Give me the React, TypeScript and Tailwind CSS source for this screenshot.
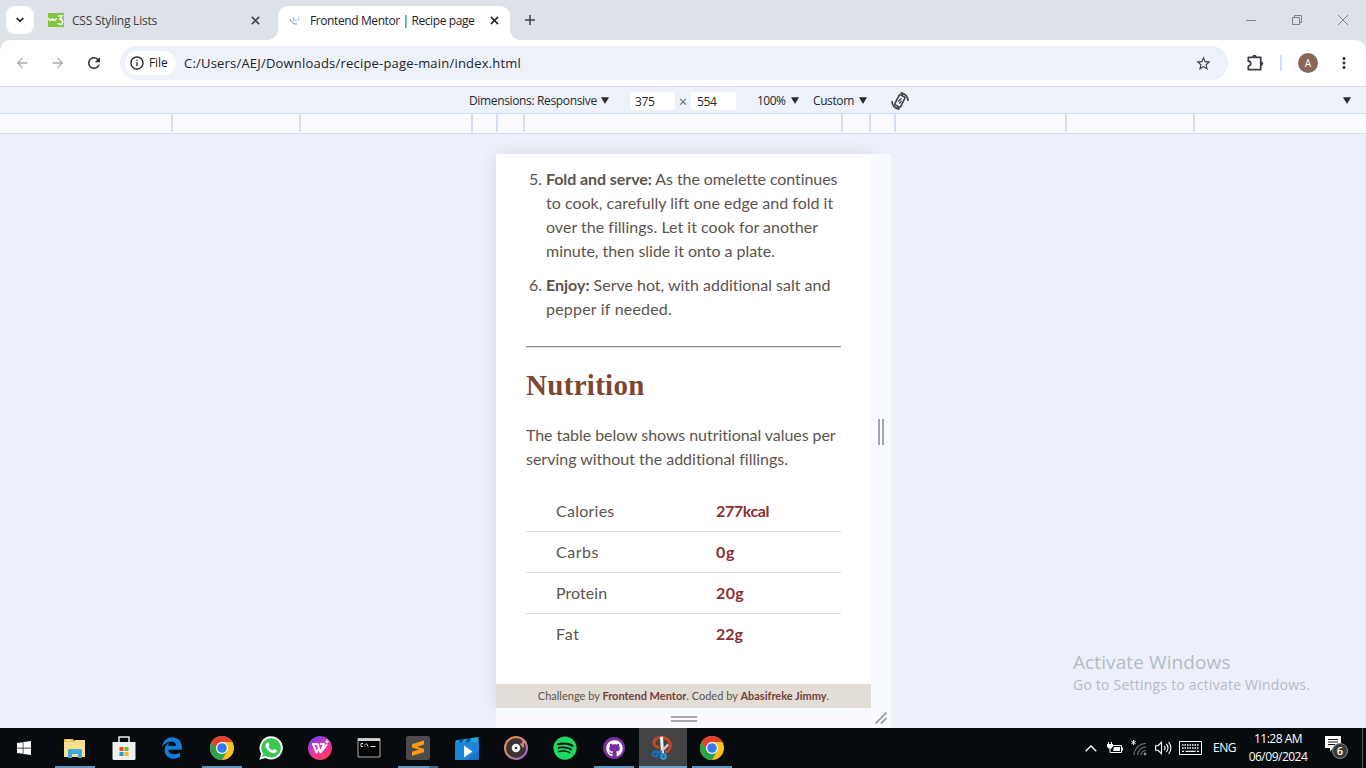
import React from "react";
import { MdArrowBack, MdArrowForward, MdRefresh, MdInfoOutline, MdStarBorder, MdMoreVert } from "react-icons/md";
import { FaWindows, FaEdgeLegacy, FaSpotify, FaGithub } from "react-icons/fa6";

const Chrome = () => (
  <svg viewBox="0 0 24 24" className="size-6">
    <circle cx="12" cy="12" r="12" fill="#fbc31c" />
    <path d="M1.6 6A12 12 0 0 1 22.4 6L12 6L6.8 15z" fill="#e2402f" />
    <path d="M1.6 6L6.8 15L17.2 15L12 24A12 12 0 0 1 1.6 6z" fill="#2ba24c" />
    <circle cx="12" cy="12" r="6" fill="#fff" />
    <circle cx="12" cy="12" r="4.8" fill="#2f7de9" />
  </svg>
);

const Explorer = () => (
  <svg viewBox="0 0 24 24" className="size-6">
    <path d="M1 3h9l1.500 2H22v16H1z" fill="#e8b84a" />
    <path d="M1 6h10l1-2h10v17H1z" fill="#fbe08f" />
    <path d="M5 22v-7.500a1.500 1.500 0 0 1 1.500-1.500h11a1.500 1.500 0 0 1 1.500 1.500V22h-4v-4h-6v4z" fill="#3fa9dd" />
    <path d="M3 4.500h5" stroke="#fff2c0" />
  </svg>
);

const Store = () => (
  <svg viewBox="0 0 24 24" className="size-6">
    <path d="M7 7V1h10v6" fill="none" stroke="#eee" strokeWidth="1.500" />
    <path d="M.5 6h23v16.500a1.500 1.500 0 0 1-1.500 1.500H2A1.500 1.500 0 0 1 .5 22.500z" fill="#efefef" />
    <path d="M7.500 11h4v4h-4z" fill="#e2502b" />
    <path d="M12.500 11h4v4h-4z" fill="#7db82c" />
    <path d="M7.500 16h4v4h-4z" fill="#1f9fe4" />
    <path d="M12.500 16h4v4h-4z" fill="#fcb913" />
  </svg>
);

const Wps = () => (
  <svg viewBox="0 0 24 24" className="size-6">
    <defs>
      <linearGradient id="wps" x1="0.2" y1="0" x2=".7" y2="1">
        <stop offset="0" stopColor="#6a3cf5" />
        <stop offset=".5" stopColor="#e832b0" />
        <stop offset="1" stopColor="#ff3b4e" />
      </linearGradient>
    </defs>
    <circle cx="12" cy="12" r="12" fill="url(#wps)" />
    <path d="M5 8h4.500l3 8.500L16 8M5 8l3.500 8.500L11 12M12.500 8h3.500M12.500 16.500L18.500 9" fill="none" stroke="#fff" strokeWidth="2" strokeLinejoin="round" strokeLinecap="round" />
    <path d="M19 3l.8 1.700 1.700.8-1.700.8L19 8l-.8-1.700-1.700-.8 1.700-.8z" fill="#fff" />
  </svg>
);

const Terminal = () => (
  <svg viewBox="0 0 24 24" className="size-6">
    <path d="M1 2.500h22v18.500H1z" fill="#050505" stroke="#aaa" />
    <path d="M1 2.500h22v2.500H1z" fill="#d4d4d4" />
    <path d="M6 7.500H4v3h2M8 8v.8M8 9.800v.8M9.500 7.500l1.700 3.200M13.500 10.500h5" fill="none" stroke="#e8e8e8" strokeWidth="1" />
  </svg>
);

const Sublime = () => (
  <svg viewBox="0 0 24 24" className="size-6">
    <rect width="24" height="24" rx="2" fill="#4b4b4b" />
    <path d="M6 8.200L18 4.500v4L11 11l7 1.800v3.400L6 19.800v-4l7-2.400-7-1.800z" fill="#ff9a0b" />
  </svg>
);

const Movies = () => (
  <svg viewBox="0 0 24 24" className="size-6">
    <path d="M.5 4.500L23.500 1v6H.5z" fill="#20a6e4" />
    <path d="M5 3.800l4-.6-2.500 4h-4zM12.500 2.700l4-.6L14 7h-4z" fill="#0d4f92" />
    <rect y="6.500" width="24" height="17.500" rx="1.500" fill="#1a72c4" />
    <path d="M0 6.500h24v8L12 24H1.500A1.500 1.500 0 0 1 0 22.500z" fill="#1b86d8" />
    <path d="M9 9.500l8.500 6L9 21.500z" fill="#fff" />
  </svg>
);

const Groove = () => (
  <svg viewBox="0 0 24 24" className="size-6">
    <defs>
      <linearGradient id="grv" x1="0" y1="0" x2="1" y2="1">
        <stop offset="0" stopColor="#f08a48" />
        <stop offset=".5" stopColor="#d98a80" />
        <stop offset="1" stopColor="#8f5bd8" />
      </linearGradient>
    </defs>
    <circle cx="12" cy="12" r="11" fill="#3a3535" stroke="url(#grv)" strokeWidth="2" />
    <path d="M16.500 7.500c1.500 1 2.300 2.400 2.500 4V6l3.500.8" fill="none" stroke="#d58278" strokeWidth="1.800" />
    <circle cx="12" cy="12" r="4.300" fill="#f2f2f2" />
    <circle cx="12" cy="12" r="1.300" fill="#3a3535" />
  </svg>
);

const Snip = () => (
  <svg viewBox="0 0 24 24" className="size-6">
    <path d="M8.500 11.500C4.500 11 2.500 8.500 3 5.500 4 2 9 1 13 1.800c4.500 1 7 5 6.200 9-.5 3-2.400 4.700-5.200 5.200" fill="none" stroke="#c8461f" strokeWidth="3" />
    <path d="M9 1l3-.5 1 17-3-1z" fill="#f0f0f0" />
    <path d="M16.500 7.500l1.500 2-8 8-2-1.500z" fill="#c7cdd2" />
    <circle cx="4.500" cy="18" r="2.500" fill="none" stroke="#1a6fbd" strokeWidth="2.400" />
    <circle cx="12.500" cy="20.500" r="2.200" fill="none" stroke="#2c93e0" strokeWidth="2.400" />
    <path d="M7 17l4-1.500" stroke="#1a6fbd" strokeWidth="2" />
  </svg>
);

const Whats = () => (
  <svg viewBox="0 0 24 24" className="size-6">
    <path d="M12.200.3A11.600 11.600 0 0 0 2.200 17.800L.4 23.700l6.100-1.700A11.600 11.600 0 1 0 12.200.3z" fill="#fff" />
    <path d="M12.200 2.200a9.700 9.700 0 0 0-8.100 15.200l-1.100 3.700 3.800-1.100A9.700 9.700 0 1 0 12.200 2.200z" fill="#3ac651" />
    <path d="M8.200 6.500c.6-.3 1.100-.2 1.400.4l.8 1.900c.2.600-.5 1.100-.9 1.700.9 1.900 2.300 3.100 4.200 3.900.6-.5 1.100-1.400 1.600-1.300l2.100 1c.6.300.4 1 .2 1.500-.7 1.600-2.500 2-4.200 1.400-3.400-1.100-5.700-3.500-6.800-6.300-.5-1.800.3-3.400 1.600-4.200z" fill="#fff" />
  </svg>
);

const Github = () => (
  <span className="ml-px flex size-[22px] items-center justify-center rounded-full bg-[#7a2f9e]">
    <FaGithub className="size-[17px] text-white" />
  </span>
);

const Spotify = () => (
  <span className="flex size-6 rounded-full bg-[#08150c]">
    <FaSpotify className="size-6 text-[#1fd761]" />
  </span>
);

type App = { icon: React.ReactNode; bar?: "full" | "split" | "active" };
const apps: App[] = [
  { icon: <Explorer />, bar: "full" },
  { icon: <Store /> },
  { icon: <FaEdgeLegacy className="size-[22px] text-[#0f7dd9]" /> },
  { icon: <Chrome />, bar: "full" },
  { icon: <Whats /> },
  { icon: <Wps /> },
  { icon: <Terminal /> },
  { icon: <Sublime />, bar: "split" },
  { icon: <Movies /> },
  { icon: <Groove /> },
  { icon: <Spotify /> },
  { icon: <Github />, bar: "full" },
  { icon: <Snip />, bar: "active" },
  { icon: <Chrome />, bar: "full" },
];

const Close = ({ className }: { className: string }) => (
  <svg viewBox="0 0 10 10" className={className}>
    <path d="M1 1l8 8M9 1l-8 8" fill="none" stroke="currentColor" strokeWidth="1.700" />
  </svg>
);

const Caret = () => (
  <svg viewBox="0 0 8 7" className="h-[7px] w-2 shrink-0">
    <path d="M0 .3h8L4 7z" fill="#26292d" />
  </svg>
);

const Rotate = () => (
  <svg viewBox="0 0 18 18" className="ml-[24px] size-[18px]" fill="none" stroke="#3f4347" strokeWidth="1.600">
    <path d="M11.300 3.300l3.200 3.200a1 1 0 0 1 0 1.400l-6.600 6.600a1 1 0 0 1-1.400 0l-3.200-3.200a1 1 0 0 1 0-1.400l6.600-6.600a1 1 0 0 1 1.400 0z" transform="rotate(-18 9 9)" />
    <path d="M7.300 9.500l3.200-3M8.300 11.500l2.400-2.300" strokeWidth="1.300" />
    <path d="M5.500 2.700C7.500.8 10.500.5 12.800 1.500M17 5.500c.5 3.500-.6 6.500-3 8.700M12.500 15.500c-2.500 1.900-5.700 1.900-8 .4M1 8.500c-.5 3 .8 5.900 3.300 7.600M4.800 12.800v3.400H1.500M13 5V1.700h3.300" strokeWidth="0" />
    <path d="M1 9c-.2 4 2.800 7.600 7 8.100M8.300 17.400L6.200 14.800M17 9c.2-4-2.800-7.600-7-8.100M9.700.6l2.100 2.600" />
  </svg>
);

const Puzzle = () => (
  <svg viewBox="0 0 18 18" className="ml-[18px] size-[18px]">
    <path d="M2.300 3.300h12.400v12.400H2.300v-3.700a2.400 2.400 0 0 0 0-4.800z" fill="none" stroke="#3b3e42" strokeWidth="1.700" strokeLinejoin="round" />
    <path d="M6.300 3a2.200 2.200 0 0 1 4.400 0zM15 7.300a2.200 2.200 0 0 1 0 4.400z" fill="#3b3e42" />
  </svg>
);

function TabStrip() {
  return (
    <div className="flex h-10 items-center bg-[#dde1e8] text-[12px] text-[#3a3e44]">
      <div className="ml-1.5 flex size-7 items-center justify-center rounded-[9px] bg-white">
        <svg viewBox="0 0 8 6" className="h-1.5 w-2">
          <path d="M.7 1l3.300 3.300L7.300 1" fill="none" stroke="#1f1f1f" strokeWidth="1.700" />
        </svg>
      </div>
      <svg viewBox="0 0 16 14" className="ml-3.5 h-3.5 w-4">
        <path d="M0 0h16v14H0z" fill="#84c441" />
        <path d="M1 5c0 3 3 3 3.500.5C5 8 8 8 8.500 5M10 3h4.300L12 6.300c4 0 3 5.200.3 5.200-1.300 0-2-.6-2.300-1.500" fill="none" stroke="#fff" strokeWidth="1.500" />
      </svg>
      <span className="ml-2 w-[179px] pt-px whitespace-nowrap tracking-[-0.22px]">CSS Styling Lists</span>
      <Close className="size-[9px] shrink-0" />
      <div className="ml-[8px] size-2.5 shrink-0 self-end bg-[radial-gradient(circle_at_0_0,#dde1e8_9.5px,#fff_10px)]" />
      <div className="mt-1.5 flex h-[34px] w-[232px] items-center rounded-t-[10px] bg-white pb-1.5 pl-[11px] text-[#1f2226]">
        <svg viewBox="0 0 12 10" className="mt-0.5 h-2.5 w-3">
          <path d="M1 3c1 3 3 5 7 5" fill="none" stroke="#a6b7ce" strokeWidth="1.400" />
          <path d="M4.500 1v3.500L8 3.500M9 1.500l1.500 1L9 4" fill="none" stroke="#8fc8e8" />
        </svg>
        <span className="ml-[9px] w-[180px] pt-px whitespace-nowrap tracking-[-0.4px]">Frontend Mentor | Recipe page</span>
        <Close className="size-[9px] shrink-0" />
      </div>
      <div className="size-2.5 shrink-0 self-end bg-[radial-gradient(circle_at_100%_0,#dde1e8_9.5px,#fff_10px)]" />
      <svg viewBox="0 0 10 10" className="ml-[5px] size-2.5">
        <path d="M5 0v10M0 5h10" stroke="#3c4043" strokeWidth="1.500" />
      </svg>
      <div className="ml-auto flex items-center gap-[36px] pr-[18px] text-[#7d8187]">
        <svg viewBox="0 0 10 10" className="size-2.5"><path d="M0 5.500h10" stroke="currentColor" /></svg>
        <svg viewBox="0 0 10 10" className="size-2.5"><path d="M.5 2.500h7v7h-7zM2.500 2.500v-2h7v7h-2" fill="none" stroke="currentColor" /></svg>
        <svg viewBox="0 0 10 10" className="size-2.5"><path d="M0 0l10 10M10 0L0 10" stroke="currentColor" /></svg>
      </div>
    </div>
  );
}

function Toolbar() {
  return (
    <div className="bg-[#dde1e8]">
      <div className="flex h-[46px] items-center rounded-t-[10px] bg-white">
        <MdArrowBack className="ml-3.5 size-4 text-[#a9acb0]" />
        <MdArrowForward className="ml-5 size-4 text-[#a9acb0]" />
        <MdRefresh className="ml-[19px] size-[18px] text-[#303337]" />
        <div className="ml-[17px] flex h-[34px] w-[1108px] items-center rounded-full bg-[#edf1fa] pr-4 pl-[5px] text-[#202327]">
          <div className="flex h-6 w-[51px] items-center rounded-full bg-white pl-1 text-[12px] tracking-[-0.1px]">
            <MdInfoOutline className="size-4" />
            <span className="ml-1">File</span>
          </div>
          <span className="ml-2 pt-px text-[13px] tracking-[0.2px] whitespace-nowrap">C:/Users/AEJ/Downloads/recipe-page-main/index.html</span>
          <MdStarBorder className="ml-auto size-[17px] text-[#3b3e42]" />
        </div>
        <Puzzle />
        <div className="ml-4 h-4 w-0.5 bg-[#d2e1f8]" />
        <div className="ml-4 flex size-5 items-center justify-center rounded-full bg-[#8a6559] text-[10px] text-white">A</div>
        <MdMoreVert className="ml-[17px] size-[18px] text-[#303337]" />
      </div>
    </div>
  );
}

function DeviceBar() {
  return (
    <div className="flex h-7 items-center border-y border-t-[#d9dde3] border-b-[#d1e0f6] bg-[#edf1fa] pt-px pl-[469px] text-[12px] whitespace-nowrap text-[#26292d]">
      <span className="w-[132px] tracking-[-0.35px]">Dimensions: Responsive</span>
      <Caret />
      <span className="ml-[21px] h-[18px] w-[45px] rounded-[3px] bg-white pl-[5px] leading-[19px] tracking-[-0.4px]">375</span>
      <span className="w-4 pt-0.5 text-center text-[14px] leading-4 text-[#5f6368]">×</span>
      <span className="h-[18px] w-[45px] rounded-[3px] bg-white pl-[6px] leading-[19px] tracking-[-0.4px]">554</span>
      <span className="ml-[21px] w-[34px] tracking-[-0.5px]">100%</span>
      <Caret />
      <span className="ml-[14px] w-[46px] tracking-[-0.4px]">Custom</span>
      <Caret />
      <Rotate />
      <span className="mr-[15px] ml-auto flex"><Caret /></span>
    </div>
  );
}

function Ruler() {
  const seg = "border-r-2 border-[#d3e0f5]";
  return (
    <div className="flex h-5 border-b border-[#d1e0f6] bg-[#f9fbff] pb-px">
      <div className={`w-[173px] ${seg}`} />
      <div className={`w-[128px] ${seg}`} />
      <div className={`w-[172px] ${seg}`} />
      <div className={`w-[25px] ${seg}`} />
      <div className={`w-[27px] ${seg}`} />
      <div className={`w-[318px] ${seg}`} />
      <div className={`w-[28px] ${seg}`} />
      <div className={`w-[25px] ${seg}`} />
      <div className={`w-[171px] ${seg}`} />
      <div className={`w-[128px] ${seg}`} />
    </div>
  );
}

const rows = [
  { name: "Calories", value: "277kcal", nameFit: "tracking-[0.25px]", valueFit: "tracking-[-0.4px]" },
  { name: "Carbs", value: "0g", nameFit: "tracking-[0.5px]", valueFit: "tracking-[0.8px]" },
  { name: "Protein", value: "20g", nameFit: "tracking-[0.05px]", valueFit: "tracking-[0.4px]" },
  { name: "Fat", value: "22g", nameFit: "tracking-[0.8px]", valueFit: "tracking-normal" },
];

function Recipe() {
  return (
    <div className="flex h-[554px] w-[375px] flex-col bg-white pt-[13px] font-['Lato',sans-serif] text-[16px] leading-6 whitespace-nowrap text-[#5c544d]">
      <div className="flex px-[30px]">
        <span className="w-5 pl-[3px]">5.</span>
        <div>
          <p className="tracking-[-0.08px]"><b>Fold and serve:</b> As the omelette continues</p>
          <p className="tracking-[0.02px]">to cook, carefully lift one edge and fold it</p>
          <p className="tracking-[0.02px]">over the fillings. Let it cook for another</p>
          <p className="tracking-[-0.03px]">minute, then slide it onto a plate.</p>
        </div>
      </div>
      <div className="mt-2.5 flex px-[30px]">
        <span className="w-5 pl-[3px]">6.</span>
        <div>
          <p className="tracking-[-0.01px]"><b>Enjoy:</b> Serve hot, with additional salt and</p>
          <p className="tracking-[0.2px]">pepper if needed.</p>
        </div>
      </div>
      <div className="mx-[30px] mt-[25px] h-0.5 border-t border-b border-t-[#8f8f8f] border-b-[#e6e6e6]" />
      <h2 className="mt-5 px-[30px] font-['Liberation_Serif',serif] text-[29px] leading-[34px] font-bold tracking-[0.3px] text-[#7c4630]">Nutrition</h2>
      <div className="mt-[21px] px-[30px]">
        <p className="tracking-[-0.06px]">The table below shows nutritional values per</p>
        <p className="tracking-[-0.01px]">serving without the additional fillings.</p>
      </div>
      <div className="mx-[30px] mt-5">
        {rows.map((r, i) => (
          <div key={r.name} className={`flex h-[41px] items-center border-b pl-[30px] ${i < 3 ? "border-[#dcdcdc]" : "border-transparent"}`}>
            <span className={`w-[160px] ${r.nameFit}`}>{r.name}</span>
            <b className={`text-[#8f2e35] ${r.valueFit}`}>{r.value}</b>
          </div>
        ))}
      </div>
      <div className="mt-auto h-6 bg-[#e2ddd7] text-center text-[11px] leading-6">
        Challenge by <b className="text-[#73413a]">Frontend Mentor</b>. Coded by <b className="text-[#73413a]">Abasifreke Jimmy</b>.
      </div>
    </div>
  );
}

function Stage() {
  return (
    <div className="flex flex-1 items-start bg-[#ecf0fa] pt-5">
      <div className="ml-[496px] w-[395px]">
        <div className="flex">
          <div className="shadow-[0_0_14px_rgba(90,100,130,0.16)]"><Recipe /></div>
          <div className="relative flex w-5 items-center justify-center gap-0.5 bg-[#f8faff] pt-0.5">
            <div className="h-[26px] w-0.5 bg-[#a4a6ac]" />
            <div className="h-[26px] w-0.5 bg-[#a4a6ac]" />
          </div>
        </div>
        <div className="relative flex h-5 items-center bg-[#f8faff]">
          <div className="flex w-[375px] flex-col items-center gap-0.5 pt-0.5">
            <div className="h-0.5 w-[26px] bg-[#a4a6ac]" />
            <div className="h-0.5 w-[26px] bg-[#a4a6ac]" />
          </div>
          <svg viewBox="0 0 12 12" className="ml-1 size-3"><path d="M.5 11.500l11-11M6 11.500l5.500-5.500" stroke="#9a9ca2" strokeWidth="1.800" /></svg>
        </div>
      </div>
      <div className="mt-[496px] ml-[182px] whitespace-nowrap text-[#b7bbc2]">
        <p className="text-[19px] leading-6 tracking-[0.1px]">Activate Windows</p>
        <p className="text-[14px] leading-[22px] tracking-[0.22px]">Go to Settings to activate Windows.</p>
      </div>
    </div>
  );
}

function Tray() {
  return (
    <div className="ml-auto flex items-center text-white">
      <svg viewBox="0 0 12 7" className="h-[7px] w-3"><path d="M.7 6.300L6 1l5.300 5.300" fill="none" stroke="#fff" strokeWidth="1.300" /></svg>
      <svg viewBox="0 0 16 12" className="ml-2.5 h-3 w-4">
        <path d="M5.500 3.500h9v7H4.500" fill="none" stroke="#fff" />
        <path d="M7 5h6v4H6zM14.500 5.500H16v3h-1.500z" fill="#fff" />
        <path d="M1.500 0v2M4.500 0v2" stroke="#fff" />
        <path d="M0 2h6v2.500L4.500 6.500h-3L0 4.500z" fill="#fff" />
        <path d="M3 6v4.500h2" fill="none" stroke="#fff" />
      </svg>
      <svg viewBox="0 0 16 16" className="ml-2 size-4">
        <path d="M2.500 0v5M.3 1.200l4.400 2.600M4.700 1.200L.3 3.800" stroke="#fff" strokeWidth=".9" />
        <path d="M3 15A12 12 0 0 1 15 3.500M6.500 15A8.500 8.500 0 0 1 15 7M10 15a5 5 0 0 1 5-4.500" fill="none" stroke="#74777a" strokeWidth="1.100" />
        <circle cx="14" cy="14" r="1.400" fill="#8b8d90" />
      </svg>
      <svg viewBox="0 0 17 14" className="ml-2 h-3.5 w-[17px]">
        <path d="M.6 4.700h2.500L6.500 1.300v11.400L3.100 9.300H.6zM9 4.800c1.200 1.200 1.200 3.200 0 4.400M11.300 3c2.200 2.200 2.200 5.800 0 8M13.600 1.200c3 3.200 3 8.400 0 11.600" fill="none" stroke="#fff" strokeWidth="1.100" />
      </svg>
      <svg viewBox="0 0 23 14" className="ml-[7px] h-3.5 w-[23px]">
        <path d="M.5.5h22v13H.5z" fill="none" stroke="#fff" />
        <path d="M3 4h17M3 7h17" stroke="#fff" strokeWidth="1.300" strokeDasharray="1.500 1" />
        <path d="M3 10.300h2M6.500 10.300h10M18 10.300h2" stroke="#fff" strokeWidth="1.300" />
      </svg>
      <span className="ml-[11px] w-[24px] text-[12px] tracking-[-0.5px]">ENG</span>
      <div className="ml-1.5 flex w-[70px] flex-col items-center text-[12px] leading-[18px] tracking-[-0.5px] whitespace-nowrap">
        <span>11:28 AM</span>
        <span>06/09/2024</span>
      </div>
      <div className="relative ml-[12px] h-6 w-[26px]">
        <svg viewBox="0 0 16 16" className="size-4"><path d="M0 0h16v12H8.500L5 15.500V12H0z" fill="#fff" /><path d="M3 3.500h10M3 6h10M3 8.500h7" stroke="#111" /></svg>
        <span className="absolute top-[7px] left-[7px] flex size-4 items-center justify-center rounded-full border border-[#8a8a8a] bg-[#3a3a3a] text-[11px] font-semibold">6</span>
      </div>
      <div className="mr-[3px] ml-[11px] h-10 w-px bg-[#55585b]" />
    </div>
  );
}

function Taskbar() {
  return (
    <div className="flex h-10 bg-[#080b0d]">
      <div className="flex w-[51px] items-center pl-4"><FaWindows className="size-4 text-white" /></div>
      {apps.map((a, i) => (
        <div key={i} className="mr-px flex w-12 flex-col">
          <div className={`flex h-[38px] items-center pt-0.5 pl-3 ${a.bar === "active" ? "bg-[#424446]" : ""}`}>{a.icon}</div>
          {a.bar === "full" && <div className="ml-1 h-0.5 w-10 bg-[#5d94bd]" />}
          {a.bar === "active" && <div className="h-0.5 w-12 bg-[#6aa3cd]" />}
          {a.bar === "split" && (
            <div className="ml-1 flex h-0.5"><div className="w-[31px] bg-[#5d94bd]" /><div className="w-[9px] bg-[#41687f]" /></div>
          )}
        </div>
      ))}
      <Tray />
    </div>
  );
}

export default function App() {
  return (
    <div className="flex h-[768px] w-[1366px] flex-col overflow-hidden font-['Open_Sans',sans-serif]">
      <TabStrip />
      <Toolbar />
      <DeviceBar />
      <Ruler />
      <Stage />
      <Taskbar />
    </div>
  );
}
